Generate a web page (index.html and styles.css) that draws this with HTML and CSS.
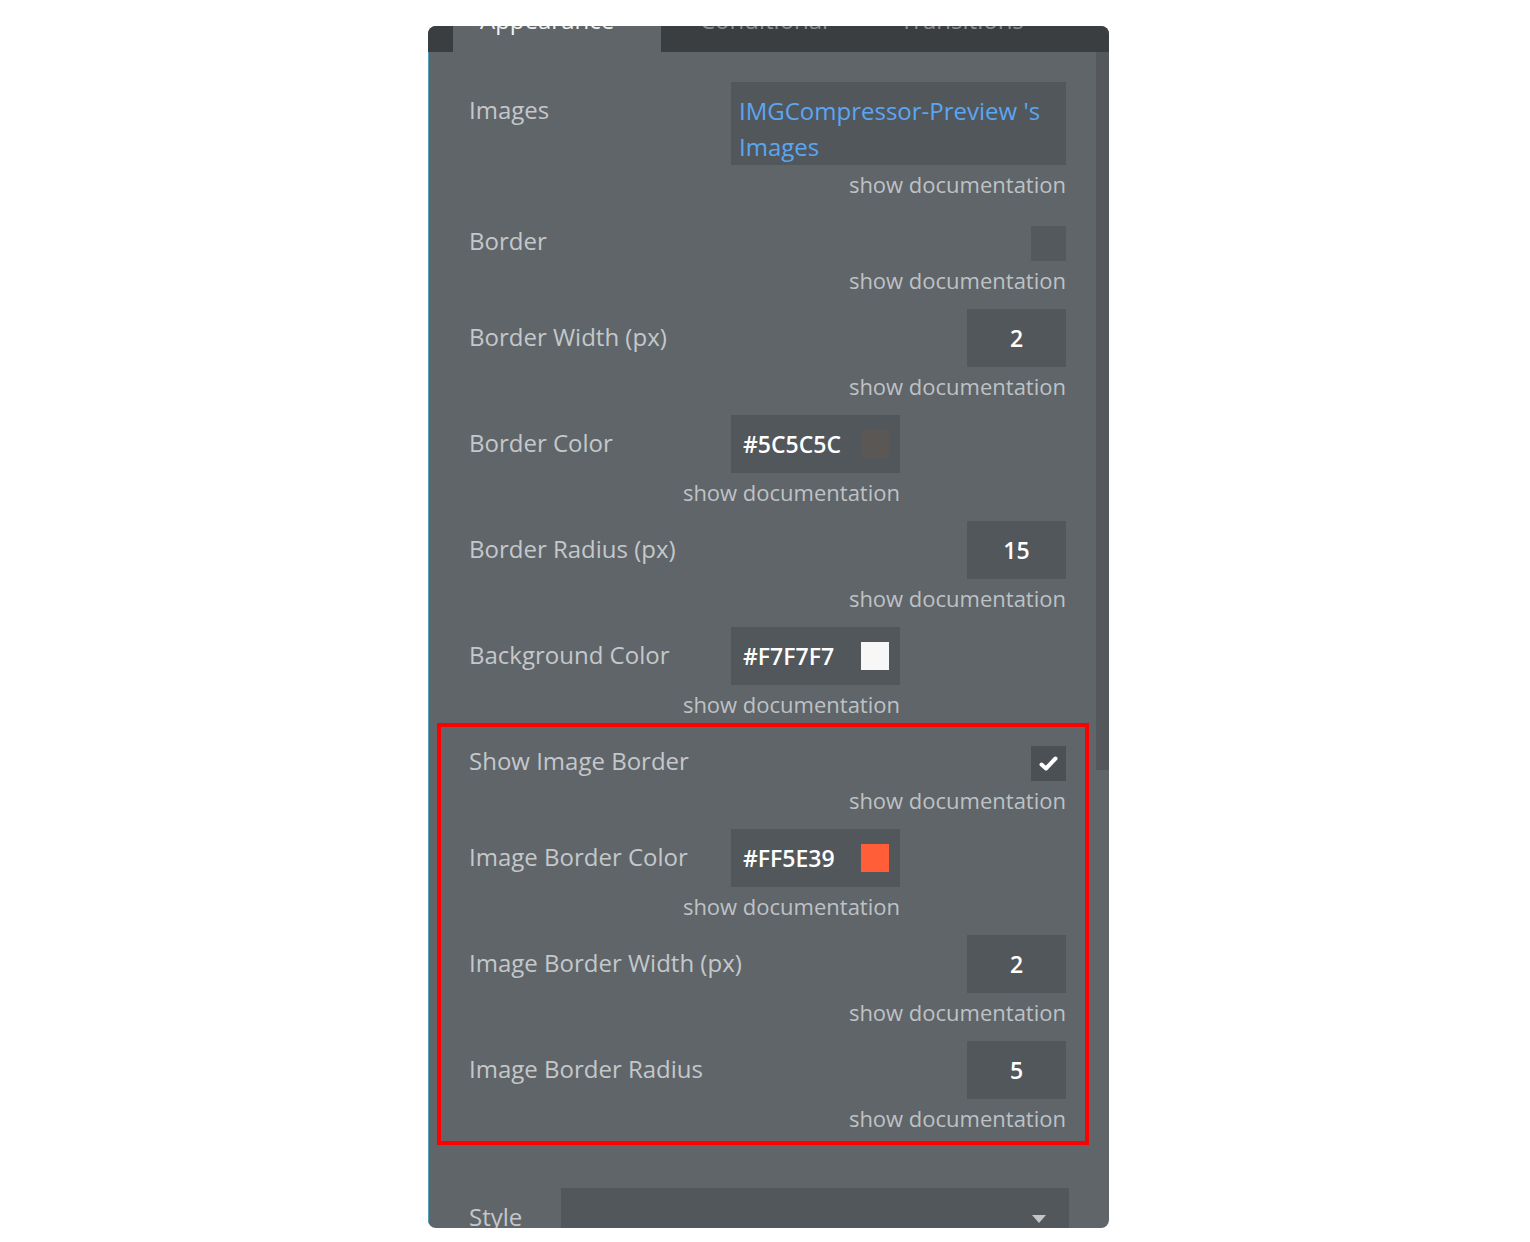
FILE: index.html
```html
<!DOCTYPE html>
<html lang="en">
<head>
<meta charset="utf-8">
<title>Property editor</title>
<link rel="stylesheet" href="styles.css">
</head>
<body>
<div class="panel">
  <div class="tabs">
    <div class="tab-gap"></div>
    <div class="tab active"><span>Appearance</span></div>
    <div class="tab"><span>Conditional</span></div>
    <div class="tab"><span>Transitions</span></div>
  </div>
  <div class="body">
    <div class="content">
      <div class="row">
        <div class="label label-top">Images</div>
        <div class="field wide">
          <div class="images-box">IMGCompressor-Preview 's Images</div>
          <div class="doc">show documentation</div>
        </div>
      </div>

      <div class="row check">
        <div class="label label-check">Border</div>
        <div class="field end">
          <div class="checkbox"></div>
          <div class="doc">show documentation</div>
        </div>
      </div>

      <div class="row">
        <div class="label">Border Width (px)</div>
        <div class="field end">
          <div class="num">2</div>
          <div class="doc">show documentation</div>
        </div>
      </div>

      <div class="row">
        <div class="label">Border Color</div>
        <div class="field start">
          <div class="color"><span>#5C5C5C</span><i class="swatch sw-grey"></i></div>
          <div class="doc">show documentation</div>
        </div>
      </div>

      <div class="row">
        <div class="label">Border Radius (px)</div>
        <div class="field end">
          <div class="num">15</div>
          <div class="doc">show documentation</div>
        </div>
      </div>

      <div class="row">
        <div class="label">Background Color</div>
        <div class="field start">
          <div class="color"><span>#F7F7F7</span><i class="swatch sw-white"></i></div>
          <div class="doc">show documentation</div>
        </div>
      </div>

      <div class="highlight">
        <div class="row check">
          <div class="label label-check">Show Image Border</div>
          <div class="field end">
            <div class="checkbox checked">
              <svg width="35" height="35" viewBox="0 0 35 35"><path d="M10.5 18.5 L15 22.5 L24.5 12.5" fill="none" stroke="#ffffff" stroke-width="4" stroke-linecap="round" stroke-linejoin="round"/></svg>
            </div>
            <div class="doc">show documentation</div>
          </div>
        </div>

        <div class="row">
          <div class="label">Image Border Color</div>
          <div class="field start">
            <div class="color"><span>#FF5E39</span><i class="swatch sw-orange"></i></div>
            <div class="doc">show documentation</div>
          </div>
        </div>

        <div class="row">
          <div class="label">Image Border Width (px)</div>
          <div class="field end">
            <div class="num">2</div>
            <div class="doc">show documentation</div>
          </div>
        </div>

        <div class="row last">
          <div class="label">Image Border Radius</div>
          <div class="field end">
            <div class="num">5</div>
            <div class="doc">show documentation</div>
          </div>
        </div>
      </div>

      <div class="divider"></div>

      <div class="style-row">
        <div class="label style-label">Style</div>
        <div class="dropdown">
          <svg width="14" height="8" viewBox="0 0 14 8"><path d="M0 0 H14 L7 8 Z" fill="#c2c6c9"/></svg>
        </div>
      </div>
    </div>
    <div class="scroll"><div class="thumb"></div></div>
  </div>
</div>
</body>
</html>
```

FILE: styles.css
```css
html, body {
  margin: 0;
  padding: 0;
  background: #ffffff;
}

body {
  font-family: "Open Sans", "DejaVu Sans", sans-serif;
}

.panel {
  margin: 26px 0 0 428px;
  width: 681px;
  height: 1202px;
  border-radius: 8px;
  overflow: hidden;
  background: #606569;
  display: flex;
  flex-direction: column;
}

.tabs {
  height: 26px;
  flex: 0 0 26px;
  background: #3a3e41;
  display: flex;
  overflow: hidden;
}

.tab-gap {
  width: 25px;
}

.tab {
  width: 200px;
  padding-left: 39px;
  box-sizing: border-box;
  color: #8c9094;
}

.tab.active {
  width: 208px;
  padding-left: 27px;
  background: #606569;
  color: #f2f2f2;
}

.tab span {
  display: block;
  margin-top: -18px;
  font-size: 24px;
  line-height: 24px;
  white-space: nowrap;
}

.body {
  flex: 1;
  display: flex;
  min-height: 0;
  box-shadow: inset 1px 0 0 #4f9fb5;
}

.content {
  flex: 1;
  padding: 30px 30px 0 41px;
  display: flex;
  flex-direction: column;
  overflow: hidden;
}

.scroll {
  width: 13px;
  flex: 0 0 13px;
}

.thumb {
  height: 718px;
  background: #54585c;
}

.row {
  display: grid;
  grid-template-columns: 262px 335px;
  margin-bottom: 18px;
}

.row.check {
  margin-top: 13px;
}

.row.last {
  margin-bottom: 0;
}

.label {
  font-size: 24px;
  line-height: 58px;
  color: #c4c8cb;
  white-space: nowrap;
  margin-top: -1px;
}

.label-top {
  line-height: 36px;
  padding-top: 11px;
}

.label-check {
  line-height: 35px;
  margin-top: -3px;
}

.field {
  display: flex;
  flex-direction: column;
  align-items: flex-end;
}

.field.start {
  justify-self: start;
  width: 169px;
}

.field.end {
  justify-self: end;
}

.field.wide {
  justify-self: stretch;
}

.doc {
  margin-top: 8px;
  font-size: 22px;
  line-height: 22px;
  color: #bec2c5;
  white-space: nowrap;
}

.images-box {
  box-sizing: border-box;
  width: 335px;
  height: 83px;
  padding: 11px 8px 0 8px;
  background: #52575b;
  color: #5ba6f2;
  font-size: 24px;
  line-height: 36px;
}

.checkbox {
  width: 35px;
  height: 35px;
  background: #54595d;
}

.checkbox.checked {
  background: #4b5054;
}

.checkbox svg {
  display: block;
}

.num {
  width: 99px;
  height: 58px;
  background: #52575b;
  color: #ffffff;
  font-size: 23px;
  font-weight: 600;
  line-height: 58px;
  text-align: center;
}

.color {
  box-sizing: border-box;
  width: 169px;
  height: 58px;
  padding: 0 11px 0 12px;
  background: #52575b;
  display: flex;
  align-items: center;
  justify-content: space-between;
  color: #ffffff;
  font-size: 23px;
  font-weight: 600;
}

.swatch {
  display: block;
  width: 28px;
  height: 28px;
}

.sw-grey {
  background: #5a5755;
}

.sw-white {
  background: #f7f7f7;
}

.sw-orange {
  background: #ff5e39;
}

.highlight {
  display: flex;
  flex-direction: column;
  margin: -10px -23px 0 -32px;
  border: 4px solid #ff0000;
  padding: 6px 19px 12px 28px;
}

.divider {
  height: 1px;
  margin: 12px -30px 0 -39px;
  background: #55595d;
}

.style-row {
  display: flex;
  margin-top: 31px;
}

.style-label {
  width: 92px;
  flex: 0 0 92px;
  margin-top: 0;
}

.dropdown {
  width: 508px;
  flex: 0 0 508px;
  height: 58px;
  margin-right: -3px;
  background: #52575b;
  display: flex;
  align-items: center;
  justify-content: flex-end;
  padding-right: 23px;
  padding-top: 4px;
  box-sizing: border-box;
}

.dropdown svg {
  display: block;
}
```
